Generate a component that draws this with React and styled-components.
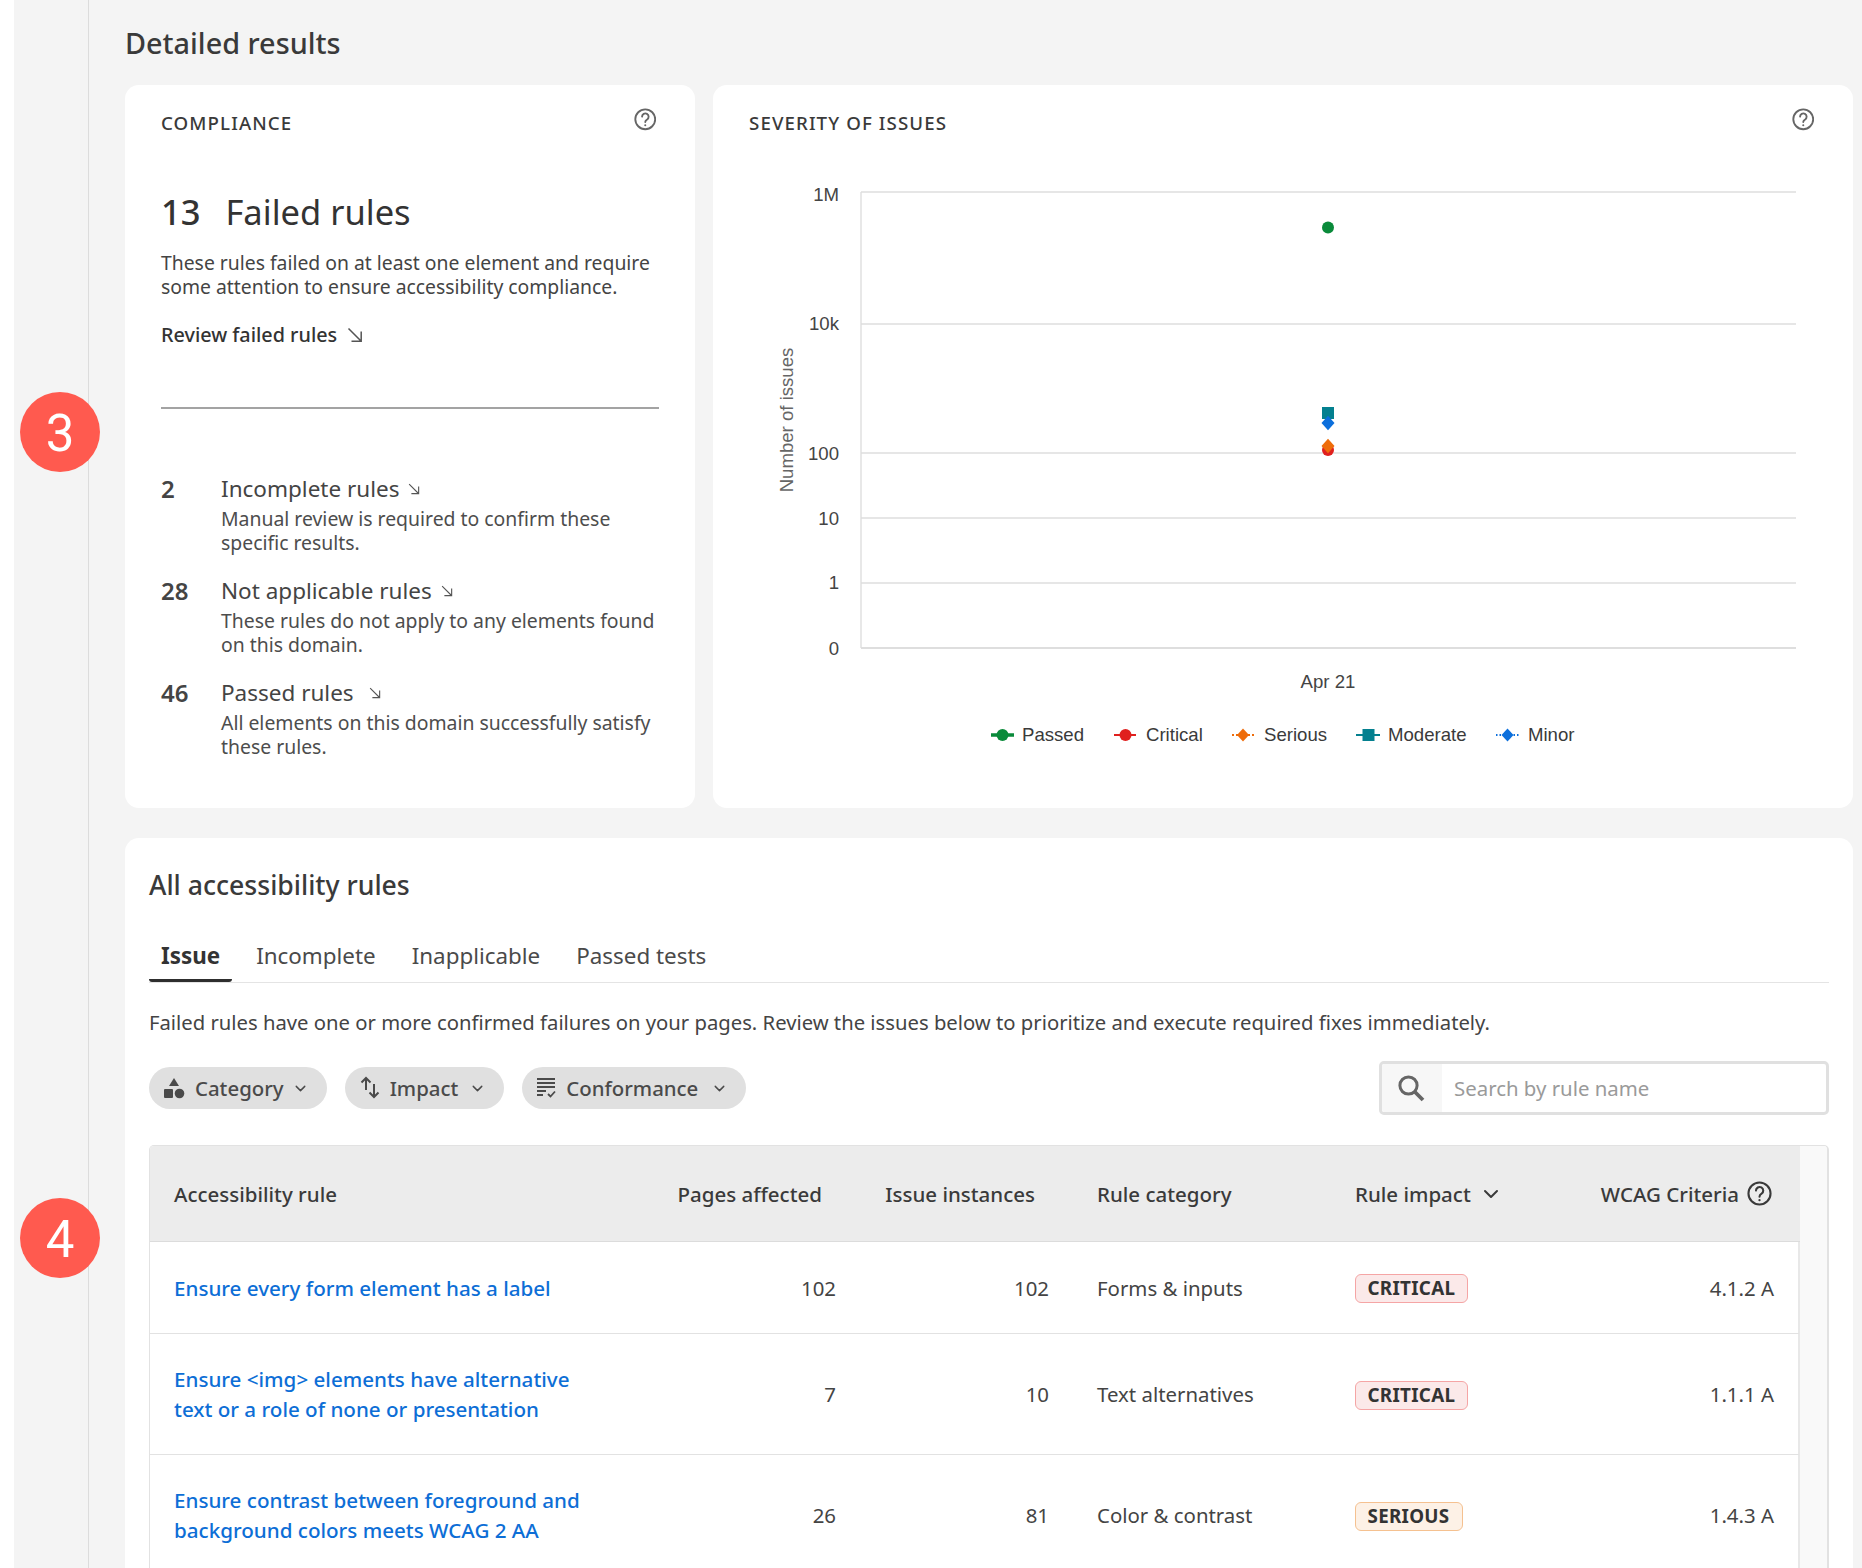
import React from "react";
import styled, { createGlobalStyle } from "styled-components";
import { ChevronDown } from "lucide-react";

const Global = createGlobalStyle`
  html, body { margin: 0; padding: 0; background: #fff; }
  body { font-family: "Noto Sans", "Open Sans", sans-serif; color: #333; }
  * { box-sizing: border-box; }
`;

const Shell = styled.div`
  position: relative;
  display: flex;
  height: 1568px;
  margin-left: 14px;
  background: #f4f4f4;
  overflow: hidden;
`;
const Rail = styled.div`
  flex: 0 0 75px;
  border-right: 1px solid #dcdcdc;
`;
const Main = styled.main`
  flex: 0 0 1728px;
  margin-left: 36px;
  padding-top: 25px;
`;
const PageTitle = styled.h2`
  margin: 0 0 24px;
  font-size: 28.8px;
  line-height: 36px;
  font-weight: 500;
  color: #3a3a3a;
`;
const TopGrid = styled.div`
  display: grid;
  grid-template-columns: 570px 1140px;
  gap: 18px;
`;
const Card = styled.section`
  background: #fff;
  border-radius: 14px;
  padding: 26px 36px ${(p) => p.$bottom ?? 49}px;
`;
const CardHead = styled.div`
  display: flex;
  justify-content: space-between;
  align-items: flex-start;
  height: 24px;
  color: #3a3a3a;
`;
const Eyebrow = styled.h3`
  margin: 0;
  font-size: 18.7px;
  line-height: 24px;
  font-weight: 500;
  letter-spacing: 1.1px;
  text-transform: uppercase;
  color: #3a3a3a;
`;
const HelpSlot = styled.span`
  display: block;
  margin: -3px 3px 0 0;
  line-height: 0;
  color: #666;
`;
const Hero = styled.div`
  display: flex;
  gap: 25px;
  margin-top: 53px;
  font-size: 34.5px;
  line-height: 48px;
  color: #333;
`;
const HeroNum = styled.span`
  font-weight: 500;
`;
const HeroLabel = styled.span`
  font-weight: 400;
`;
const Lead = styled.p`
  margin: 15px 0 0;
  font-size: 19.35px;
  line-height: 24px;
  color: #444;
`;
const ReviewLink = styled.a`
  display: flex;
  align-items: center;
  gap: 10px;
  margin-top: 24px;
  font-size: 19.8px;
  line-height: 24px;
  font-weight: 500;
  color: #333;
`;
const Divider = styled.hr`
  margin: 60px 0 0;
  border: 0;
  height: 2px;
  background: #a3a3a3;
`;
const RuleList = styled.div`
  display: grid;
  gap: 21px;
  margin-top: 65px;
`;
const RuleItem = styled.div`
  display: grid;
  grid-template-columns: 60px 1fr;
`;
const RuleCount = styled.span`
  font-size: 24px;
  line-height: 30px;
  font-weight: 600;
  color: #444;
`;
const RuleTitle = styled.div`
  display: flex;
  align-items: center;
  gap: ${(p) => p.$gap || 9}px;
  font-size: 22.5px;
  line-height: 30px;
  color: #444;
`;
const RuleDesc = styled.p`
  margin: 3px 0 0;
  font-size: 19.4px;
  line-height: 24px;
  color: #4d4d4d;
`;
const ChartSvg = styled.svg`
  display: block;
  width: 1068px;
  height: 600px;
  margin-top: 35px;
  font-family: "Liberation Sans", Arial, sans-serif;
  font-size: 18.6px;
`;

const Panel = styled.section`
  margin-top: 30px;
  padding: 29px 24px 0;
  background: #fff;
  border-radius: 14px 14px 0 0;
`;
const PanelTitle = styled.h2`
  margin: 0;
  font-size: 26.6px;
  line-height: 36px;
  font-weight: 500;
  color: #3a3a3a;
`;
const Tabs = styled.div`
  display: flex;
  gap: 12px;
  margin-top: 32px;
  border-bottom: 1px solid #e4e4e4;
`;
const Tab = styled.div`
  padding: 0 12px;
  height: 47px;
  font-size: 22.4px;
  line-height: 41px;
  font-weight: ${(p) => (p.$active ? 700 : 400)};
  color: ${(p) => (p.$active ? "#333" : "#4a4a4a")};
  border-bottom: 3px solid ${(p) => (p.$active ? "#2e2e2e" : "transparent")};
  border-radius: 3px;
`;
const Intro = styled.p`
  margin: 25px 0 0;
  font-size: 20.25px;
  line-height: 28px;
  color: #444;
`;
const FilterRow = styled.div`
  display: flex;
  align-items: center;
  gap: 18px;
  margin-top: 25px;
`;
const Pill = styled.button`
  display: flex;
  align-items: center;
  height: 42px;
  padding: 0 18px 0 14px;
  border: 0;
  border-radius: 21px;
  background: #e0e0e0;
  font-family: inherit;
  font-size: 20.4px;
  font-weight: 500;
  color: #4a4a4a;
`;
const PillLabel = styled.span`
  margin: 0 ${(p) => p.$end ?? 11}px 0 ${(p) => p.$gap || 10}px;
`;
const SearchBox = styled.div`
  display: flex;
  width: 450px;
  height: 54px;
  margin-left: auto;
  border: 3px solid #e0e0e0;
  border-radius: 5px;
  overflow: hidden;
`;
const SearchIconCell = styled.div`
  display: flex;
  align-items: center;
  justify-content: center;
  flex: 0 0 60px;
  padding-right: 2px;
  background: #f7f7f7;
  color: #666;
`;
const SearchPlaceholder = styled.div`
  padding-left: 12px;
  font-size: 20.4px;
  line-height: 48px;
  color: #9a9a9a;
`;
const TableWrap = styled.div`
  display: flex;
  margin-top: 30px;
  border: solid #e2e2e2;
  border-width: 1px 2px 0 1px;
  border-radius: 5px 5px 0 0;
  overflow: hidden;
`;
const TableBody = styled.div`
  flex: 0 0 1650px;
`;
const Gutter = styled.div`
  flex: 1;
  background: #f9f9f9;
`;
const cols = "510px 200px 213px 258px 229px 238px";
const HeadRow = styled.div`
  display: grid;
  grid-template-columns: ${cols};
  align-items: center;
  height: 96px;
  background: #ececec;
  border-bottom: 1px solid #dcdcdc;
  font-size: 20.5px;
  font-weight: 500;
  color: #3a3a3a;
`;
const HeadCell = styled.div`
  display: flex;
  align-items: center;
  gap: ${(p) => p.$gap || 10}px;
  padding: 0 ${(p) => p.$padEnd ?? 24}px 0 24px;
  justify-content: ${(p) => (p.$padEnd !== undefined ? "flex-end" : "flex-start")};
  white-space: nowrap;
`;
const Row = styled.div`
  display: grid;
  grid-template-columns: ${cols};
  align-items: center;
  padding: 30px 0;
  border-bottom: 1px solid #e2e2e2;
  border-right: 2px solid #e8e8e8;
  font-size: 20.4px;
  line-height: 30px;
  color: #444;
`;
const RuleLink = styled.a`
  padding-left: 24px;
  color: #0d6ed6;
  font-size: 20.6px;
  font-weight: 500;
`;
const NumCell = styled.div`
  padding-right: 24px;
  text-align: right;
`;
const TextCell = styled.div`
  padding-left: 24px;
`;
const Badge = styled.span`
  display: inline-block;
  height: 29px;
  margin-left: -0.5px;
  padding: 0 12px;
  border: 1px solid ${(p) => (p.$tone === "serious" ? "#f5c190" : "#f5a5a5")};
  border-radius: 6px;
  background: ${(p) => (p.$tone === "serious" ? "#fdf1e6" : "#fbe9e9")};
  font-size: 18.8px;
  line-height: 26px;
  font-weight: 700;
  letter-spacing: 0.3px;
  color: #333;
`;
const Marker = styled.div`
  position: absolute;
  left: 6px;
  top: ${(p) => p.$top}px;
  width: 80px;
  height: 80px;
  border-radius: 50%;
  background: #ff5a4f;
  color: #fff;
  font-family: Roboto, "Liberation Sans", sans-serif;
  font-size: 51px;
  line-height: 83px;
  text-align: center;
`;
const RuleName = styled.div`
  max-width: 415px;
`;

const Help = ({ size = 22.5 }) => (
  <svg width={size} height={size} viewBox="0 0 24 24" fill="none" stroke="currentColor" strokeWidth="2">
    <circle cx="12" cy="12" r="10.6" />
    <path d="M8.6 9.200a3.500 3.500 0 1 1 5.400 3c-1.300.8-2 1.400-2 2.800" strokeLinecap="round" />
    <circle cx="12" cy="18.400" r="1.100" fill="currentColor" stroke="none" />
  </svg>
);
const Arrow = ({ size = 16 }) => (
  <svg width={size} height={size} viewBox="0 0 16 16" fill="none" stroke="#555" strokeWidth="1.500">
    <path d="M1.500 1.500 14 14M14.200 4.500v9.700H4.500" />
  </svg>
);
const CategoryIcon = () => (
  <svg width="22" height="22" viewBox="0 0 22 22" fill="#4a4a4a">
    <path d="M11 1l5 8H6z" />
    <rect x="1" y="12" width="9" height="9" rx="1" />
    <circle cx="16.500" cy="16.500" r="4.800" />
  </svg>
);
const ImpactIcon = () => (
  <svg width="22" height="24" viewBox="0 0 22 24" fill="none" stroke="#4a4a4a" strokeWidth="2">
    <path d="M7 14V2M2.500 6.500 7 2l4.500 4.500M15 8v13M10.500 16.500 15 21l4.500-4.500" />
  </svg>
);
const ConformanceIcon = () => (
  <svg width="20" height="22" viewBox="0 0 20 22" fill="none" stroke="#4a4a4a" strokeWidth="1.800">
    <path d="M1 2h18M1 6h18M1 10h18M1 14h9M1 18h6M12 17l2.500 2.500L19 14.500" />
  </svg>
);
const SearchGlyph = () => (
  <svg width="28" height="28" viewBox="0 0 28 28" fill="none" stroke="currentColor">
    <circle cx="11.500" cy="11.500" r="8.600" strokeWidth="3" />
    <path d="M17.500 17.500 26 26" strokeWidth="3.800" />
  </svg>
);

const gridY = [192, 324, 453, 518, 583];
const ticks = [
  ["1M", 201],
  ["10k", 330],
  ["100", 460],
  ["10", 525],
  ["1", 589],
  ["0", 655],
];

const Diamond = ({ x, y, r = 6.5, fill }) => (
  <path d={`M${x} ${y - r * 1.1}L${x + r} ${y}L${x} ${y + r * 1.1}L${x - r} ${y}Z`} fill={fill} />
);

const legend = [
  { label: "Passed", x1: 991, x2: 1014, tx: 1022, color: "#0a8a3a", width: 3.5, shape: "circle" },
  { label: "Critical", x1: 1114, x2: 1137, tx: 1146, color: "#e0201e", width: 2, dash: "6 2", shape: "circle" },
  { label: "Serious", x1: 1232, x2: 1254, tx: 1264, color: "#ee6c0a", width: 2, dash: "2 2", shape: "diamond" },
  { label: "Moderate", x1: 1356, x2: 1381, tx: 1388, color: "#04808f", width: 2, dash: "8 3 2 3", shape: "square" },
  { label: "Minor", x1: 1496, x2: 1519, tx: 1528, color: "#0c6fdc", width: 2, dash: "1.500 2", shape: "diamond" },
];

const Chart = () => (
  <ChartSvg viewBox="749 170 1068 600">
    <path d="M861 192V648" stroke="#e0e0e0" strokeWidth="1.500" fill="none" />
    {gridY.map((y) => (
      <path key={y} d={`M861 ${y}H1796`} stroke="#dedede" strokeWidth="1.500" fill="none" />
    ))}
    <path d="M861 648H1796" stroke="#dedede" strokeWidth="2" fill="none" />
    {ticks.map(([t, y]) => (
      <text key={t} x="839" y={y} textAnchor="end" fill="#444">{t}</text>
    ))}
    <text transform="translate(793 420) rotate(-90)" textAnchor="middle" fill="#666">Number of issues</text>
    <text x="1328" y="688" textAnchor="middle" fill="#444">Apr 21</text>
    <circle cx="1328" cy="227.500" r="6" fill="#0a8a3a" />
    <rect x="1322" y="407" width="12" height="12" fill="#04808f" />
    <Diamond x={1328} y={423} fill="#0c6fdc" />
    <circle cx="1328" cy="450" r="6" fill="#e0201e" />
    <Diamond x={1328} y={446} fill="#ee6c0a" />
    {legend.map((l) => {
      const cx = (l.x1 + l.x2) / 2;
      return (
        <g key={l.label}>
          <path d={`M${l.x1} 735H${l.x2}`} stroke={l.color} strokeWidth={l.width} strokeDasharray={l.dash} fill="none" />
          {l.shape === "circle" && <circle cx={cx} cy="735" r="6" fill={l.color} />}
          {l.shape === "diamond" && <Diamond x={cx} y={735} r={6} fill={l.color} />}
          {l.shape === "square" && <rect x={cx - 6} y="729" width="12" height="12" fill={l.color} />}
          <text x={l.tx} y="741" fill="#3a3a3a">{l.label}</text>
        </g>
      );
    })}
  </ChartSvg>
);

const ruleItems = [
  { n: "2", title: "Incomplete rules", gap: 9, desc: "Manual review is required to confirm these specific results." },
  { n: "28", title: "Not applicable rules", gap: 9, desc: "These rules do not apply to any elements found on this domain." },
  { n: "46", title: "Passed rules", gap: 15, desc: "All elements on this domain successfully satisfy these rules." },
];

const rows = [
  { rule: "Ensure every form element has a label", pages: 102, inst: 102, cat: "Forms & inputs", impact: "CRITICAL", tone: "critical", wcag: "4.1.2 A" },
  { rule: "Ensure <img> elements have alternative text or a role of none or presentation", pages: 7, inst: 10, cat: "Text alternatives", impact: "CRITICAL", tone: "critical", wcag: "1.1.1 A" },
  { rule: "Ensure contrast between foreground and background colors meets WCAG 2 AA", pages: 26, inst: 81, cat: "Color & contrast", impact: "SERIOUS", tone: "serious", wcag: "1.4.3 A" },
];

export default function App() {
  return (
    <>
      <Global />
      <Shell>
        <Rail />
        <Main>
          <PageTitle>Detailed results</PageTitle>
          <TopGrid>
            <Card>
              <CardHead>
                <Eyebrow>Compliance</Eyebrow>
                <HelpSlot><Help /></HelpSlot>
              </CardHead>
              <Hero>
                <HeroNum>13</HeroNum>
                <HeroLabel>Failed rules</HeroLabel>
              </Hero>
              <Lead>These rules failed on at least one element and require some attention to ensure accessibility compliance.</Lead>
              <ReviewLink>Review failed rules <Arrow /></ReviewLink>
              <Divider />
              <RuleList>
                {ruleItems.map((r) => (
                  <RuleItem key={r.n}>
                    <RuleCount>{r.n}</RuleCount>
                    <div>
                      <RuleTitle $gap={r.gap}>{r.title} <Arrow size={12} /></RuleTitle>
                      <RuleDesc>{r.desc}</RuleDesc>
                    </div>
                  </RuleItem>
                ))}
              </RuleList>
            </Card>
            <Card $bottom={0}>
              <CardHead>
                <Eyebrow>Severity of issues</Eyebrow>
                <HelpSlot><Help /></HelpSlot>
              </CardHead>
              <Chart />
            </Card>
          </TopGrid>
          <Panel>
            <PanelTitle>All accessibility rules</PanelTitle>
            <Tabs>
              <Tab $active>Issue</Tab>
              <Tab>Incomplete</Tab>
              <Tab>Inapplicable</Tab>
              <Tab>Passed tests</Tab>
            </Tabs>
            <Intro>Failed rules have one or more confirmed failures on your pages. Review the issues below to prioritize and execute required fixes immediately.</Intro>
            <FilterRow>
              <Pill><CategoryIcon /><PillLabel $end={8}>Category</PillLabel><ChevronDown size={17} strokeWidth={2} /></Pill>
              <Pill><ImpactIcon /><PillLabel $gap={9} $end={11}>Impact</PillLabel><ChevronDown size={17} strokeWidth={2} /></Pill>
              <Pill><ConformanceIcon /><PillLabel $end={13}>Conformance</PillLabel><ChevronDown size={17} strokeWidth={2} /></Pill>
              <SearchBox>
                <SearchIconCell><SearchGlyph /></SearchIconCell>
                <SearchPlaceholder>Search by rule name</SearchPlaceholder>
              </SearchBox>
            </FilterRow>
            <TableWrap>
              <TableBody>
                <HeadRow>
                  <HeadCell>Accessibility rule</HeadCell>
                  <HeadCell $padEnd={38}>Pages affected</HeadCell>
                  <HeadCell $padEnd={38}>Issue instances</HeadCell>
                  <HeadCell>Rule category</HeadCell>
                  <HeadCell $gap={8}>Rule impact <ChevronDown size={24} strokeWidth={2} /></HeadCell>
                  <HeadCell $padEnd={26} $gap={8}>WCAG Criteria <Help size={25} /></HeadCell>
                </HeadRow>
                {rows.map((r) => (
                  <Row key={r.rule}>
                    <RuleLink><RuleName>{r.rule}</RuleName></RuleLink>
                    <NumCell>{r.pages}</NumCell>
                    <NumCell>{r.inst}</NumCell>
                    <TextCell>{r.cat}</TextCell>
                    <TextCell><Badge $tone={r.tone}>{r.impact}</Badge></TextCell>
                    <NumCell>{r.wcag}</NumCell>
                  </Row>
                ))}
              </TableBody>
              <Gutter />
            </TableWrap>
          </Panel>
        </Main>
        <Marker $top={392}>3</Marker>
        <Marker $top={1198}>4</Marker>
      </Shell>
    </>
  );
}
